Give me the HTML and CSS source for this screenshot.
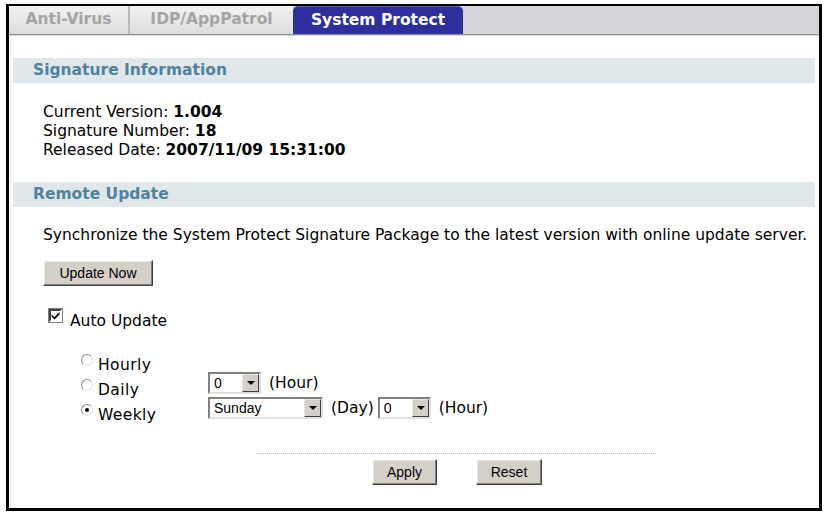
FILE: index.html
```html
<!DOCTYPE html>
<html>
<head>
    <title>System Protect</title>
    <meta name="viewport" content="width=device-width, initial-scale=1.0">
    <link rel="stylesheet" href="styles.css">
</head>
<body>
    <div class="caption"></div>
    <div id="frame">
        <div class="tabs">
            <div class="tab tab-av">Anti-Virus</div>
            <div class="tab tab-idp">IDP/AppPatrol</div>
            <div class="tab tab-active">System Protect</div>
        </div>

        <div class="content">
            <div class="section-title">Signature Information</div>
            <div class="section-body info">
                <div>Current Version: <b>1.004</b></div>
                <div>Signature Number: <b>18</b></div>
                <div>Released Date: <b>2007/11/09 15:31:00</b></div>
            </div>

            <div class="section-title">Remote Update</div>
            <div class="section-body">
                <div class="sync">Synchronize the System Protect Signature Package to the latest version with online update server.</div>
                <button class="btn btn-update">Update Now</button>

                <div class="check-row">
                    <span class="checkbox">
                        <svg width="9" height="9" viewBox="0 0 9 9"><path d="M0.5 3.5 L3.5 6 L8.5 1 L8.5 3.5 L3.5 8.5 L0.5 5.5 Z" fill="#000"/></svg>
                    </span>
                    <span class="check-label">Auto Update</span>
                </div>

                <div class="schedule">
                    <div class="radios">
                        <div class="radio-cell"><span class="radio"></span><span class="radio-label">Hourly</span></div>
                        <div class="radio-cell"><span class="radio"></span><span class="radio-label">Daily</span></div>
                        <div class="radio-cell"><span class="radio checked"></span><span class="radio-label">Weekly</span></div>
                    </div>
                    <div class="options">
                        <div class="opts">
                            <div class="select sel-hour"><span class="sel-text">0</span><span class="sel-arrow"></span></div>
                            <span>(Hour)</span>
                        </div>
                        <div class="opts">
                            <div class="select sel-day"><span class="sel-text">Sunday</span><span class="sel-arrow"></span></div>
                            <span>(Day)</span>
                            <div class="select sel-hour sel-near"><span class="sel-text">0</span><span class="sel-arrow"></span></div>
                            <span>(Hour)</span>
                        </div>
                    </div>
                </div>

                <div class="actions">
                    <div class="dots"></div>
                    <div class="buttons">
                        <button class="btn btn-apply">Apply</button>
                        <button class="btn btn-reset">Reset</button>
                    </div>
                </div>
            </div>
        </div>
    </div>
</body>
</html>
```

FILE: styles.css
```css
body {
    margin: 0;
    background-color: #fff;
    font-family: "DejaVu Sans", Verdana, sans-serif;
    font-size: 15.5px;
    color: #000;
}

.caption {
    height: 4px;
}

#frame {
    margin-left: 6px;
    width: 810px;
    height: 502px;
    border: 3px solid #000;
    border-top-width: 2px;
    box-sizing: content-box;
    display: flex;
    flex-direction: column;
}

/* tabs */
.tabs {
    display: flex;
    height: 28px;
    background-color: #d5d5d9;
    border-bottom: 1px solid #8e8e8e;
    box-shadow: 0 1px 0 #d8d8d8;
}

.tab {
    height: 28px;
    line-height: 27px;
    text-align: center;
    font-weight: bold;
    font-size: 15.5px;
    box-sizing: border-box;
}

.tab-av,
.tab-idp {
    color: #a4a4a4;
    background: linear-gradient(#f2f2f2, #dcdcdc);
}

.tab-av {
    width: 119px;
}

.tab-idp {
    width: 165px;
    border-left: 2px solid #b9b9b9;
}

.tab-active {
    width: 170px;
    color: #fff;
    background-color: #2e2e9c;
    border-top: 1px solid #5a5ac0;
    border-radius: 5px 5px 0 0;
    line-height: 26px;
}

/* content */
.content {
    flex: 1;
    margin-left: 1px;
    border-left: 1px solid #ececec;
    padding: 23px 4px 0 2px;
}

.section-title {
    height: 25px;
    line-height: 25px;
    background-color: #e0e7eb;
    color: #50819d;
    font-weight: bold;
    padding-left: 20px;
}

.section-body {
    padding-left: 30px;
}

.info {
    padding-top: 20px;
    padding-bottom: 22px;
    line-height: 19px;
}

.sync {
    padding-top: 19px;
    line-height: 19px;
}

.btn {
    display: block;
    font-family: "Liberation Sans", Arial, sans-serif;
    font-size: 14px;
    color: #000;
    height: 26px;
    background-color: #d4d0c8;
    border: 1px solid;
    border-color: #fff #404040 #404040 #fff;
    box-shadow: inset -1px -1px 0 #808080, inset 1px 1px 0 #e8e6e2;
    padding: 0;
}

.btn-update {
    width: 110px;
    margin-top: 15px;
}

.check-row {
    display: flex;
    align-items: flex-start;
    margin-top: 22px;
    margin-left: 6px;
    height: 22px;
}

.checkbox {
    width: 13px;
    height: 13px;
    box-sizing: border-box;
    border: 2px solid;
    border-color: #404040 #fff #fff #404040;
    outline: 1px solid #808080;
    background-color: #fff;
    display: flex;
    align-items: center;
    justify-content: center;
    margin-top: 1px;
    margin-right: 8px;
}

.check-label {
    padding-top: 4px;
    line-height: 19px;
}

/* schedule */
.schedule {
    display: flex;
    height: 75px;
    margin-top: 24px;
    margin-left: 38px;
}

.radios {
    width: 127px;
}

.radio-cell {
    display: flex;
    align-items: flex-start;
    height: 25px;
}

.radio {
    width: 12px;
    height: 12px;
    border-radius: 50%;
    box-sizing: border-box;
    border: 1px solid #8a8a8a;
    border-right-color: #e0e0e0;
    border-bottom-color: #e0e0e0;
    background-color: #fff;
    margin-right: 5px;
    position: relative;
}

.radio.checked::after {
    content: "";
    position: absolute;
    left: 3px;
    top: 3px;
    width: 4px;
    height: 4px;
    border-radius: 50%;
    background-color: #000;
}

.radio-label {
    padding-top: 2px;
    line-height: 19px;
    letter-spacing: 0.4px;
}

.options {
    padding-top: 18px;
}

.opts {
    display: flex;
    align-items: flex-start;
    gap: 8px;
    margin-bottom: 3px;
}

.select {
    display: flex;
    height: 22px;
    box-sizing: border-box;
    border: 2px solid;
    border-color: #808080 #e0e0e0 #e0e0e0 #808080;
    background-color: #fff;
    font-family: "Liberation Sans", Arial, sans-serif;
    font-size: 14px;
}

.sel-hour {
    width: 53px;
}

.sel-near {
    margin-left: -4px;
}

.sel-day {
    width: 115px;
}

.sel-text {
    flex: 1;
    line-height: 18px;
    padding-left: 4px;
}

.sel-arrow {
    width: 17px;
    height: 18px;
    box-sizing: border-box;
    background-color: #d4d0c8;
    border: 1px solid;
    border-color: #e8e6e2 #404040 #404040 #e8e6e2;
    position: relative;
}

.sel-arrow::after {
    content: "";
    position: absolute;
    left: 4px;
    top: 6px;
    border-left: 4px solid transparent;
    border-right: 4px solid transparent;
    border-top: 4px solid #000;
}

.opts > span {
    line-height: 22px;
}

/* bottom buttons */
.actions {
    margin-top: 24px;
    margin-left: 215px;
    width: 398px;
}

.dots {
    border-top: 1px dotted #b4b4b4;
}

.buttons {
    display: flex;
    justify-content: center;
    gap: 39px;
    margin-top: 5px;
}

.btn-apply {
    width: 65px;
}

.btn-reset {
    width: 66px;
}
```
